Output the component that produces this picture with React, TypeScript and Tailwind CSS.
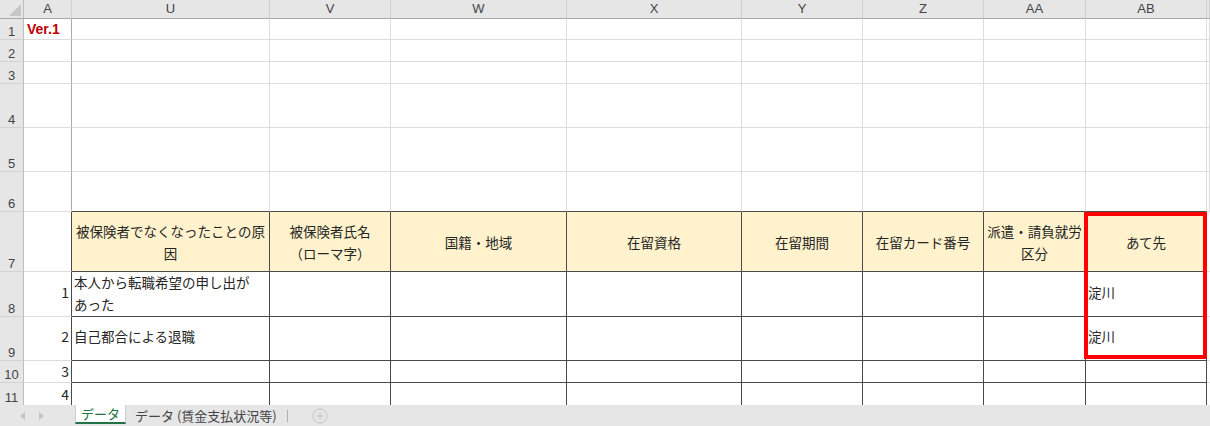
import React from 'react';

const FONT = { fontFamily: '"Noto Sans CJK JP", "Noto Sans", sans-serif' };

// column letters as shown in the header; the last one is the sliver past AB
const COLS = ['', 'A', 'U', 'V', 'W', 'X', 'Y', 'Z', 'AA', 'AB', ''];

const HEADERS: React.ReactNode[] = [
  <>被保険者でなくなったことの原<br />因</>,
  <>被保険者氏名<br />（ローマ字）</>,
  '国籍・地域',
  '在留資格',
  '在留期間',
  '在留カード番号',
  <>派遣・請負就労<br />区分</>,
  'あて先',
];

type DataRow = { no: string; reason?: React.ReactNode; dest?: string; pad: string; last?: boolean };

const DATA: DataRow[] = [
  { no: '1', reason: <>本人から転職希望の申し出が<br />あった</>, dest: '淀川', pad: 'pb-[3px]' },
  { no: '2', reason: '自己都合による退職', dest: '淀川', pad: 'pb-[5px]' },
  { no: '3', pad: 'pb-0' },
  { no: '4', pad: 'pb-0', last: true },
];

function ColHeader() {
  return (
    <>
      {COLS.map((c, i) =>
        i === 0 ? (
          <div key={i} className="relative bg-[#e6e6e6] border-r border-b border-r-[#bdbdbd] border-b-[#a8a8a8]">
            <svg className="absolute right-[2px] bottom-[2px]" width="12" height="12" viewBox="0 0 12 12">
              <polygon points="12,0 12,12 0,12" fill="#c6c6c6" />
            </svg>
          </div>
        ) : (
          <div
            key={i}
            className="flex items-center justify-center bg-[#e6e6e6] border-r border-b border-r-[#cfcfcf] border-b-[#a8a8a8] text-[13px] text-[#444]"
            style={{ fontFamily: '"Liberation Sans", Arial, sans-serif' }}
          >
            {c}
          </div>
        )
      )}
    </>
  );
}

function RowHeader({ n, last }: { n: number; last?: boolean }) {
  return (
    <div
      className={
        'flex items-end justify-center pb-[1px] bg-[#e6e6e6] border-r border-r-[#bdbdbd] text-[13px] leading-none text-[#444] ' +
        (last ? '' : 'border-b border-b-[#d2d2d2]')
      }
      style={{ fontFamily: '"Liberation Sans", Arial, sans-serif' }}
    >
      {n}
    </div>
  );
}

// plain empty sheet row (rows 1-6)
function BlankRow({ n }: { n: number }) {
  return (
    <>
      <RowHeader n={n} />
      <div className="border-r border-b border-r-[#ababab] border-b-[#dcdcdc] flex items-center pl-[3px]">
        {n === 1 && (
          <span
            className="text-[14px] font-bold text-[#c00000]"
            style={{ fontFamily: '"Liberation Sans", Arial, sans-serif' }}
          >
            Ver.1
          </span>
        )}
      </div>
      {COLS.slice(2).map((_, i) => (
        <div
          key={i}
          className={
            n === 6 && i < 8
              ? 'border-r border-b border-r-[#dcdcdc] border-b-[#4a4a4a]'
              : 'border-r border-b border-r-[#dcdcdc] border-b-[#dcdcdc]'
          }
        />
      ))}
    </>
  );
}

export default function App() {
  return (
    <div className="w-[1210px] h-[426px] overflow-hidden bg-white flex flex-col" style={FONT}>
      <div className="relative">
        <div className="grid grid-cols-[24px_48px_198px_121px_176px_175px_121px_121px_102px_121px_3px] grid-rows-[19px_21px_22px_22px_44px_44px_40px_60px_45px_44px_22px_22px]">
          <ColHeader />
          {[1, 2, 3, 4, 5, 6].map((n) => (
            <BlankRow key={n} n={n} />
          ))}

          {/* row 7: table header */}
          <RowHeader n={7} />
          <div className="border-r border-b border-r-[#4a4a4a] border-b-[#dcdcdc]" />
          {HEADERS.map((h, i) => (
            <div
              key={i}
              className="flex items-center justify-center text-center bg-[#fff2cc] border-r border-b border-r-[#4a4a4a] border-b-[#4a4a4a] text-[13.5px] leading-[22px] text-[#262626] whitespace-nowrap"
            >
              <span>{h}</span>
            </div>
          ))}
          <div className="border-b border-b-[#dcdcdc]" />

          {/* rows 8-11: data */}
          {DATA.map((r, ri) => {
            const line = r.last ? 'border-r border-r-[#4a4a4a]' : 'border-r border-b border-r-[#4a4a4a] border-b-[#4a4a4a]';
            return (
              <React.Fragment key={ri}>
                <RowHeader n={8 + ri} last={r.last} />
                <div
                  className={
                    'flex items-center justify-end pr-[2px] border-r border-r-[#4a4a4a] text-[14px] text-[#262626] ' +
                    (r.last ? '' : 'border-b border-b-[#dcdcdc] ') +
                    r.pad
                  }
                >
                  {r.no}
                </div>
                <div className={'flex items-center pl-[2px] text-[13.5px] leading-[22px] text-[#262626] whitespace-nowrap ' + line + ' ' + r.pad}>
                  {r.reason && <span>{r.reason}</span>}
                </div>
                {[0, 1, 2, 3, 4, 5].map((k) => (
                  <div key={k} className={line} />
                ))}
                <div className={'flex items-center pl-[2px] text-[13.5px] text-[#262626] ' + line + ' ' + r.pad}>
                  {r.dest}
                </div>
                <div className={r.last ? '' : 'border-b border-b-[#dcdcdc]'} />
              </React.Fragment>
            );
          })}
        </div>

        {/* red highlight around the destination column */}
        <div className="absolute left-[1084px] top-[212px] w-[123px] h-[147px] border-4 border-[#ff0000] pointer-events-none" />
      </div>

      {/* sheet tabs */}
      <div className="flex-1 flex items-stretch bg-[#e6e6e6] text-[13px]">
        <div className="w-[75px] flex items-center gap-[14px] pl-[20px]">
          <svg width="5" height="8" viewBox="0 0 5 8">
            <polygon points="5,0 5,8 0,4" fill="#c4c4c4" />
          </svg>
          <svg width="5" height="8" viewBox="0 0 5 8">
            <polygon points="0,0 0,8 5,4" fill="#c4c4c4" />
          </svg>
        </div>
        <div className="w-[51px] h-[19px] bg-white border-x border-x-[#cdcdcd] border-b-2 border-b-[#217346] flex items-center justify-center text-[#217346]">
          データ
        </div>
        <div className="pl-[9px] pr-[10px] flex items-center text-[#444]">データ (賃金支払状況等)</div>
        <div className="flex items-center">
          <div className="w-px h-[12px] bg-[#b0b0b0]" />
        </div>
        <div className="flex items-center pl-[24px]">
          <svg width="16" height="16" viewBox="0 0 16 16">
            <circle cx="8" cy="8" r="7" fill="none" stroke="#c4c4c4" strokeWidth="1" />
            <path d="M8 4.5v7M4.5 8h7" stroke="#c4c4c4" strokeWidth="1.2" />
          </svg>
        </div>
      </div>
    </div>
  );
}
